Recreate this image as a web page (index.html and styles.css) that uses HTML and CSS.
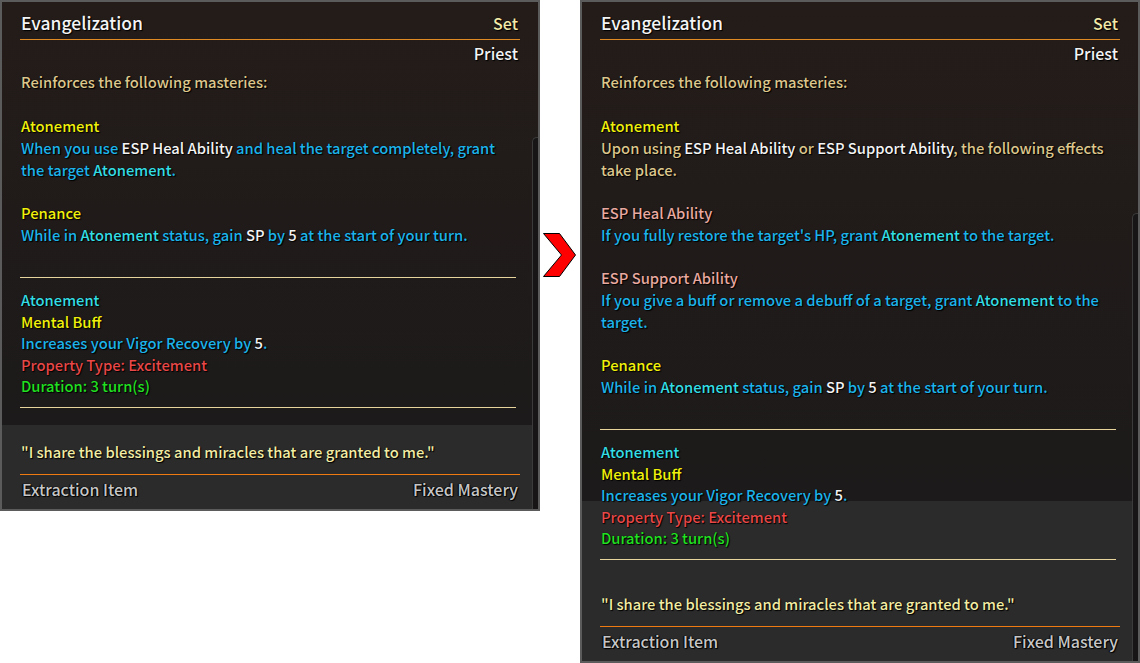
FILE: index.html
```html
<!DOCTYPE html>
<html lang="en">
<head>
<meta charset="utf-8">
<title>Evangelization</title>
<link rel="stylesheet" href="styles.css">
</head>
<body>
<div class="stage">
  <section class="panel panel--a">
    <div class="content">
      <header class="head">
        <h1 class="title">Evangelization</h1>
        <span class="kind">Set</span>
      </header>
      <div class="cls">Priest</div>
      <div class="desc">
        <p class="t intro">Reinforces the following masteries:</p>
        <p><span class="y">Atonement</span><br><span class="b">When you use <span class="w">ESP Heal Ability</span> and heal the target completely, grant<br>the target <span class="c">Atonement</span>.</span></p>
        <p><span class="y">Penance</span><br><span class="b">While in <span class="c">Atonement</span> status, gain <span class="w">SP</span> by <span class="w">5</span> at the start of your turn.</span></p>
      </div>
      <hr class="rule">
      <div class="buff">
        <div class="c">Atonement</div>
        <div class="y">Mental Buff</div>
        <div class="b">Increases your Vigor Recovery by <span class="w">5</span>.</div>
        <div class="r">Property Type: Excitement</div>
        <div class="g">Duration: 3 turn(s)</div>
      </div>
      <hr class="rule rule--end">
      <p class="quote">"I share the blessings and miracles that are granted to me."</p>
      <div class="foot"><span>Extraction Item</span><span>Fixed Mastery</span></div>
    </div>
    <div class="scroll"></div>
  </section>

  <div class="gap">
    <svg class="arrow" width="36" height="46" viewBox="0 0 36 46">
      <polygon points="1.5,1.5 17.5,1.5 33.5,23 17.5,44.5 1.5,44.5 19.5,23" fill="#ff0000" stroke="#000" stroke-width="1"/>
    </svg>
  </div>

  <section class="panel panel--b">
    <div class="content">
      <header class="head">
        <h1 class="title">Evangelization</h1>
        <span class="kind">Set</span>
      </header>
      <div class="cls">Priest</div>
      <div class="desc">
        <p class="t intro">Reinforces the following masteries:</p>
        <p><span class="y">Atonement</span><br><span class="t">Upon using <span class="w">ESP Heal Ability</span> or <span class="w">ESP Support Ability</span>, the following effects<br>take place.</span></p>
        <p><span class="p">ESP Heal Ability</span><br><span class="b">If you fully restore the target's HP, grant <span class="c">Atonement</span> to the target.</span></p>
        <p><span class="p">ESP Support Ability</span><br><span class="b">If you give a buff or remove a debuff of a target, grant <span class="c">Atonement</span> to the<br>target.</span></p>
        <p><span class="y">Penance</span><br><span class="b">While in <span class="c">Atonement</span> status, gain <span class="w">SP</span> by <span class="w">5</span> at the start of your turn.</span></p>
      </div>
      <hr class="rule">
      <div class="buff">
        <div class="c">Atonement</div>
        <div class="y">Mental Buff</div>
        <div class="b">Increases your Vigor Recovery by <span class="w">5</span>.</div>
        <div class="r">Property Type: Excitement</div>
        <div class="g">Duration: 3 turn(s)</div>
      </div>
      <hr class="rule rule--end">
      <p class="quote">"I share the blessings and miracles that are granted to me."</p>
      <div class="foot"><span>Extraction Item</span><span>Fixed Mastery</span></div>
    </div>
    <div class="scroll"></div>
  </section>
</div>
</body>
</html>
```

FILE: styles.css
```css
* { box-sizing: border-box; }

html, body {
  margin: 0;
  padding: 0;
  background: #ffffff;
}

body {
  font-family: "Noto Sans CJK KR", "Noto Sans", sans-serif;
  font-size: 14.75px;
  font-weight: 500;
  color: #f4f4f4;
}

.stage {
  display: flex;
  align-items: flex-start;
}

.panel {
  display: flex;
  border: 2px solid #5b5b5b;
  padding-left: 18px;
  background: linear-gradient(180deg,
    #241c19 0,
    #1c1a1a calc(100% - var(--foot)),
    #2b2b2b calc(100% - var(--foot)),
    #2b2b2b 100%);
  text-shadow: 0 0 1px #000, 1px 1px 1px #000;
}

.panel--a { --foot: 84px; }
.panel--b { --foot: 160px; }

.panel--a .content { width: 500px; }
.panel--b .content { width: 520px; }

.content {
  flex-shrink: 0;
}

.scroll {
  flex-shrink: 0;
  width: 6px;
  margin-left: 12px;
  border: 1px solid #3b3b3b;
  border-right: 0;
  border-bottom: 0;
  border-radius: 5px 0 0 0;
  background: #171515;
}

.panel--a .scroll { margin-top: 135px; }
.panel--b .scroll { margin-top: 211px; }

.head {
  display: flex;
  justify-content: space-between;
  align-items: flex-end;
  height: 38px;
  padding: 10px 2px 5px 0;
  border-bottom: 1px solid #e08a24;
}

.title {
  margin: 0;
  font-size: 17.5px;
  font-weight: 500;
  line-height: 22px;
  color: #f4f4f4;
  padding-left: 1px;
}

.kind {
  font-size: 16px;
  line-height: 22px;
  color: #f2eaa8;
}

.cls {
  margin-top: 2px;
  font-size: 16px;
  line-height: 22px;
  height: 22px;
  text-align: right;
  padding-right: 2px;
}

.desc {
  margin-top: 7px;
  padding-left: 1px;
  line-height: 22px;
  white-space: nowrap;
}

.desc p {
  margin: 0 0 21px;
}

.desc p.intro { margin-bottom: 22px; }

.desc p:last-child { margin-bottom: 0; }

.rule {
  margin: 31px 4px 0 0;
  height: 0;
  border: 0;
  border-top: 1px solid #e6d49c;
}

.rule--end { margin-top: 10px; }

.buff {
  margin-top: 11px;
  padding-left: 1px;
  line-height: 21.6px;
  height: 108px;
  white-space: nowrap;
}

.quote {
  margin: 33px 0 0;
  padding-left: 1px;
  line-height: 22px;
  height: 22px;
  color: #f2eca4;
  white-space: nowrap;
}

.foot {
  display: flex;
  justify-content: space-between;
  margin-top: 11px;
  height: 35px;
  padding: 3px 2px 9px 2px;
  border-top: 1px solid #f07a12;
  font-size: 16px;
  line-height: 22px;
  color: #c6c6c6;
  text-shadow: 0 0 1px #000, 1px 1px 1px #000, -1px 0 1px #000;
}

.gap {
  width: 40px;
  flex-shrink: 0;
  padding: 232px 0 0 2px;
}

.arrow { display: block; }

.w { color: #f4f4f4; }
.t { color: #dcc68c; }
.y { color: #f0f00c; }
.b { color: #1db3ea; }
.c { color: #34dde4; }
.p { color: #e9a9a0; }
.r { color: #e84848; }
.g { color: #22e022; }
```
